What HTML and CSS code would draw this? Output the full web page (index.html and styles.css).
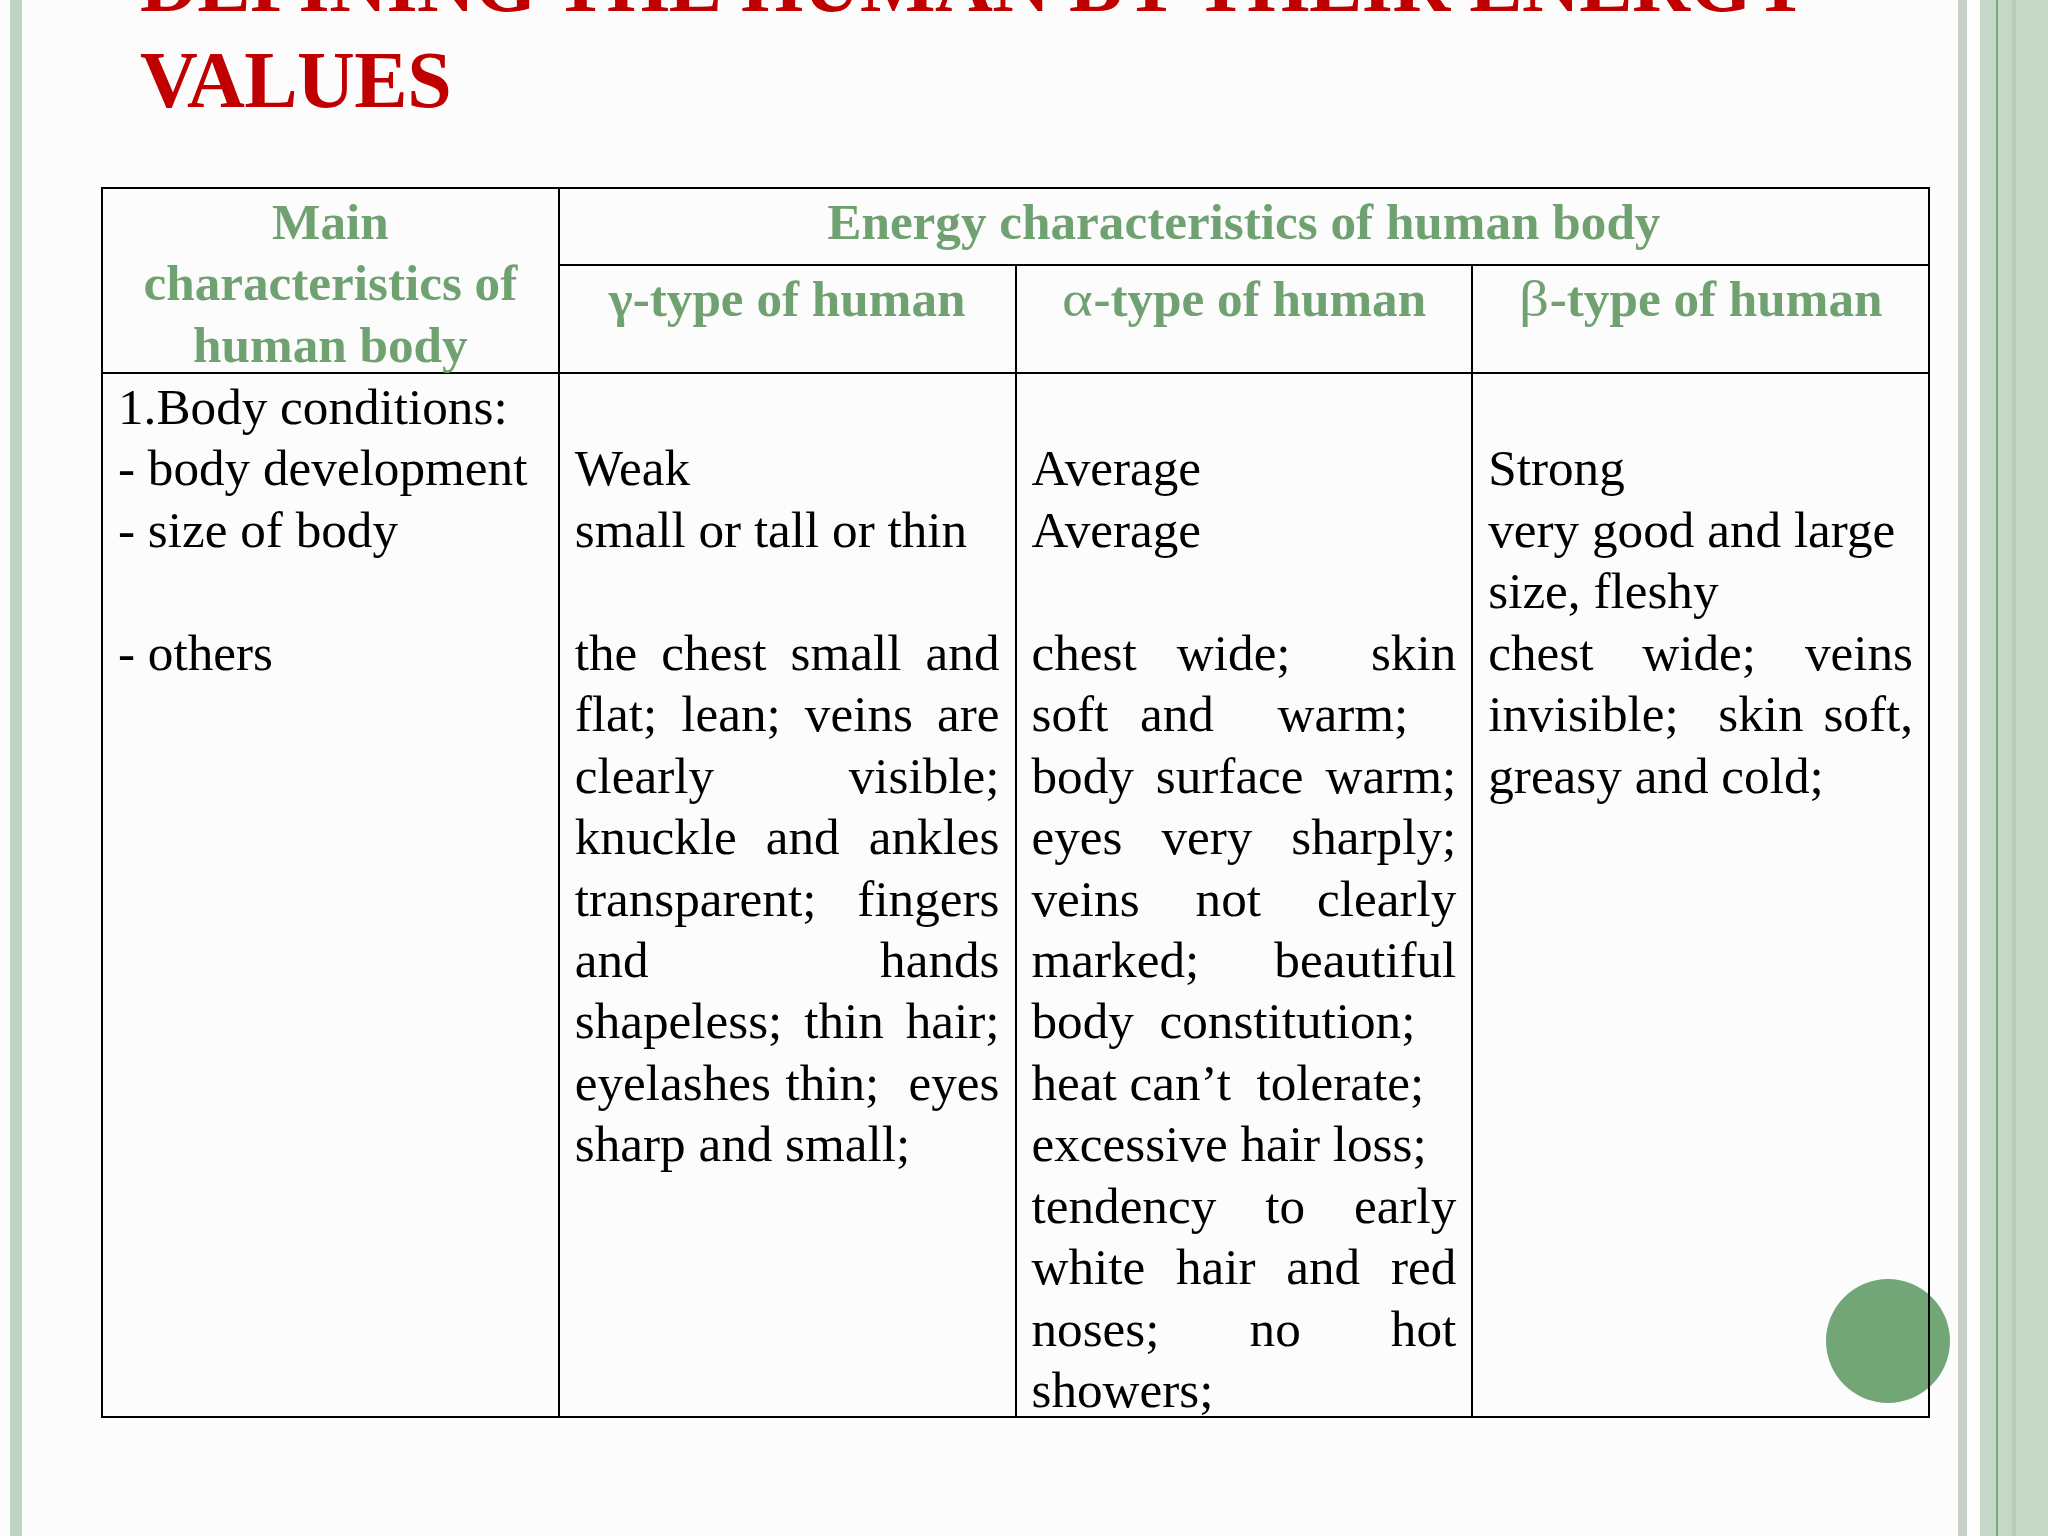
FILE: index.html
```html
<!DOCTYPE html>
<html lang="en">
<head>
<meta charset="utf-8">
<title>Defining the human by their energy values</title>
<link rel="stylesheet" href="styles.css">
</head>
<body>
<div class="slide">
  <div class="lbar"></div>
  <main class="main">
    <h1 class="title">DEFINING THE HUMAN BY THEIR ENERGY<br>VALUES</h1>
    <div class="dot"></div>
    <div class="tbl">
      <div class="cell head head-main">Main characteristics of human body</div>
      <div class="cell head head-span">Energy characteristics of human body</div>
      <div class="cell head">γ-type of human</div>
      <div class="cell head"><span class="gr">α</span>-type of human</div>
      <div class="cell head"><span class="gr">β</span>-type of human</div>

      <div class="cell body">
        <p>1.Body conditions:</p>
        <p>- body development</p>
        <p class="gap-after">- size of body</p>
        <p>- others</p>
      </div>
      <div class="cell body">
        <p class="gap-before">Weak</p>
        <p class="gap-after">small or tall or thin</p>
        <p>
          <span class="jl">the chest small and</span>
          <span class="jl">flat; lean; veins are</span>
          <span class="jl">clearly visible;</span>
          <span class="jl">knuckle and ankles</span>
          <span class="jl">transparent; fingers</span>
          <span class="jl">and hands</span>
          <span class="jl">shapeless; thin hair;</span>
          <span class="jl">eyelashes thin;&nbsp; eyes</span>
          <span class="ll">sharp and small;</span>
        </p>
      </div>
      <div class="cell body">
        <p class="gap-before">Average</p>
        <p class="gap-after">Average</p>
        <p>
          <span class="jl">chest wide;&nbsp; skin</span>
          <span class="jl trail">soft and&nbsp; warm;</span>
          <span class="jl">body surface warm;</span>
          <span class="jl">eyes very sharply;</span>
          <span class="jl">veins not clearly</span>
          <span class="jl">marked; beautiful</span>
          <span class="ll">body&nbsp; constitution;</span>
          <span class="ll">heat can’t&nbsp; tolerate;</span>
          <span class="ll">excessive hair loss;</span>
          <span class="jl">tendency to early</span>
          <span class="jl">white hair and red</span>
          <span class="jl">noses; no hot</span>
          <span class="ll">showers;</span>
        </p>
      </div>
      <div class="cell body">
        <p class="gap-before">Strong</p>
        <p>very good and large<br>size, fleshy</p>
        <p>
          <span class="jl">chest wide; veins</span>
          <span class="jl">invisible;&nbsp; skin soft,</span>
          <span class="ll">greasy and cold;</span>
        </p>
      </div>
    </div>
  </main>
  <div class="rdeco"></div>
</div>
</body>
</html>
```

FILE: styles.css
```css
* { box-sizing: border-box; }

html, body {
  margin: 0;
  padding: 0;
  background: #fcfcfc;
}

.slide {
  position: relative;
  display: flex;
  width: 2048px;
  height: 1536px;
  padding-left: 10px;
  overflow: hidden;
  background: #fcfcfc;
  font-family: "Liberation Serif", "Times New Roman", serif;
}

.lbar {
  flex: 0 0 12px;
  background: #bfd3bf;
}

.main {
  position: relative;
  flex: 1 1 auto;
}

.rdeco {
  flex: 0 0 90px;
  background: linear-gradient(to right,
    #c7cfc8 0 9px,
    #fdfdfd 9px 22px,
    #c5d8c8 22px 38px,
    #79a879 38px 40px,
    #c5d8c8 40px 54px,
    #b9ccbc 54px 58px,
    #c5d8c8 58px 90px);
}

.title {
  margin: -64px 0 0 118px;
  font-size: 80px;
  line-height: 96px;
  font-weight: bold;
  color: #c00000;
  letter-spacing: -0.5px;
}

.dot {
  position: absolute;
  left: 1804px;
  top: 1279px;
  width: 124px;
  height: 124px;
  border-radius: 50%;
  background: #72a676;
}

.tbl {
  position: relative;
  display: grid;
  grid-template-columns: repeat(4, 1fr);
  grid-template-rows: 77px 108px 1044px;
  width: 1829px;
  margin: 59px 0 0 79px;
  border-top: 2px solid #000;
  border-left: 2px solid #000;
}

.cell {
  border-right: 2px solid #000;
  border-bottom: 2px solid #000;
  padding: 2px 15px 0;
  font-size: 51.2px;
  line-height: 61.44px;
  color: #000;
}

.head {
  font-weight: bold;
  color: #70a271;
  text-align: center;
  overflow: visible;
  white-space: nowrap;
}

.head .gr {
  display: inline-block;
  font-weight: normal;
  transform: scaleX(1.15);
  margin: 0 3px 0 2px;
}

.head-main {
  grid-row: span 2;
  white-space: normal;
}

.head-span {
  grid-column: span 3;
}

.body p {
  margin: 0;
}

.gap-before { margin-top: 61.44px !important; }
.gap-after { margin-bottom: 61.44px !important; }

.jl {
  display: block;
  text-align: justify;
  text-align-last: justify;
}

.jl.trail {
  padding-right: 48px;
}

.ll {
  display: block;
  text-align: left;
}
```
